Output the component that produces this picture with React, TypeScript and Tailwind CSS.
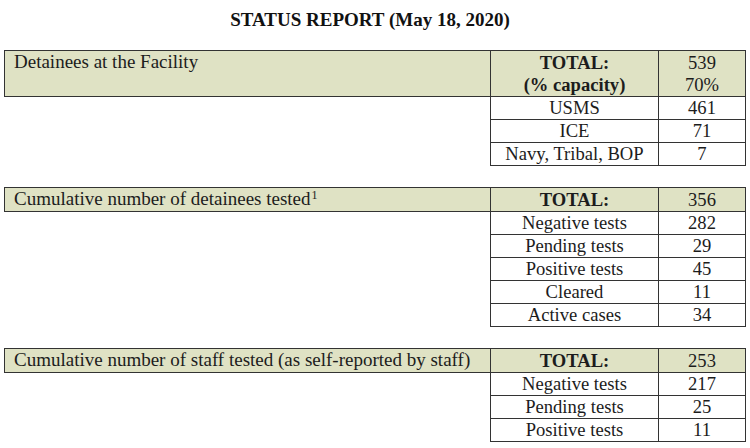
const serif = "font-['Liberation_Serif','Times_New_Roman',serif]"

type Row = { label: string; value: string }

function ReportTable({
  title,
  note,
  totalLabel,
  totalValue,
  rows,
  tall,
}: {
  title: string
  note?: string
  totalLabel: string[]
  totalValue: string[]
  rows: Row[]
  tall?: boolean
}) {
  const head = tall ? 'h-[46px]' : 'h-[24px]'
  return (
    <table className="border-collapse table-fixed w-[741px] text-[18.6px] leading-[22px] text-[#1c1c1c]">
      <colgroup>
        <col className="w-[486px]" />
        <col className="w-[168px]" />
        <col className="w-[87px]" />
      </colgroup>
      <tbody>
        <tr className={head}>
          <td className="align-top border border-[#333] bg-[#dfe2c4] pl-[9px] pt-0 text-[19px]">
            {title}
            {note && <sup className="text-[12px] ml-[1px]">{note}</sup>}
          </td>
          <td className="align-middle border border-[#333] bg-[#dfe2c4] text-center font-bold">
            {totalLabel.map((t) => (
              <div key={t}>{t}</div>
            ))}
          </td>
          <td className="align-middle border border-[#333] bg-[#dfe2c4] text-center">
            {totalValue.map((t) => (
              <div key={t}>{t}</div>
            ))}
          </td>
        </tr>
        {rows.map((r) => (
          <tr key={r.label} className="h-[23px]">
            <td />
            <td className="border border-[#333] text-center">{r.label}</td>
            <td className="border border-[#333] text-center">{r.value}</td>
          </tr>
        ))}
      </tbody>
    </table>
  )
}

export default function App() {
  return (
    <div className={`w-[750px] h-[448px] bg-white px-[4px] ${serif}`}>
      <h1 className="h-[50px] pt-[8px] pr-[10px] text-center text-[19px] leading-[24px] font-bold text-[#111]">
        STATUS REPORT (May 18, 2020)
      </h1>
      <div className="flex flex-col gap-[21px]">
        <ReportTable
          title="Detainees at the Facility"
          totalLabel={['TOTAL:', '(% capacity)']}
          totalValue={['539', '70%']}
          tall
          rows={[
            { label: 'USMS', value: '461' },
            { label: 'ICE', value: '71' },
            { label: 'Navy, Tribal, BOP', value: '7' },
          ]}
        />
        <ReportTable
          title="Cumulative number of detainees tested"
          note="1"
          totalLabel={['TOTAL:']}
          totalValue={['356']}
          rows={[
            { label: 'Negative tests', value: '282' },
            { label: 'Pending tests', value: '29' },
            { label: 'Positive tests', value: '45' },
            { label: 'Cleared', value: '11' },
            { label: 'Active cases', value: '34' },
          ]}
        />
        <ReportTable
          title="Cumulative number of staff tested (as self-reported by staff)"
          totalLabel={['TOTAL:']}
          totalValue={['253']}
          rows={[
            { label: 'Negative tests', value: '217' },
            { label: 'Pending tests', value: '25' },
            { label: 'Positive tests', value: '11' },
          ]}
        />
      </div>
    </div>
  )
}
